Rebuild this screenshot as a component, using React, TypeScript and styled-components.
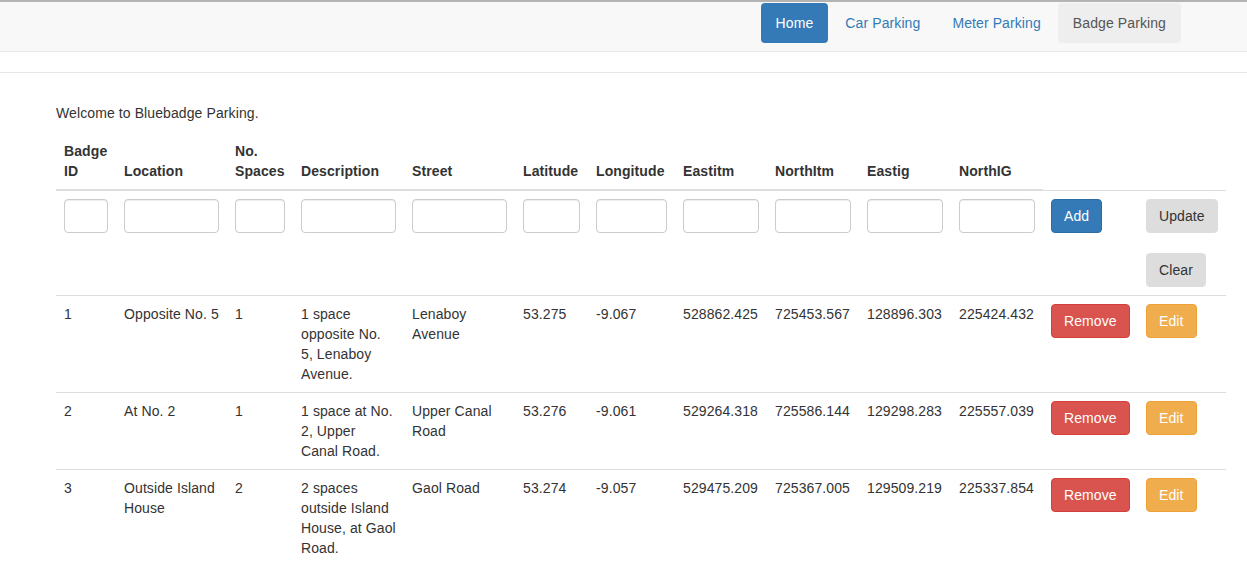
import React from "react";
import styled, { createGlobalStyle } from "styled-components";

const Global = createGlobalStyle`
  html, body { margin: 0; padding: 0; background: #fff; }
  body {
    font-family: "Liberation Sans", Arial, sans-serif;
    font-size: 14px;
    line-height: 20px;
    letter-spacing: 0.1px;
    color: #333;
    border-top: 2px solid #b3b3b3;
  }
  * { box-sizing: border-box; }
`;

const Navbar = styled.nav`
  background: #f8f8f8;
  border-bottom: 1px solid #e7e7e7;
  height: 50px;
  padding: 1px 66px 0 0;
  display: flex;
  justify-content: flex-end;
  align-items: flex-start;
`;

const Pills = styled.ul`
  list-style: none;
  margin: 0;
  padding: 0;
  display: flex;
  gap: 2px;
`;

const Pill = styled.a<{ $active?: boolean; $current?: boolean }>`
  display: block;
  padding: 10px 15px;
  border-radius: 4px;
  text-decoration: none;
  line-height: 20px;
  color: ${(p) => (p.$active ? "#fff" : p.$current ? "#555" : "#337ab7")};
  background: ${(p) => (p.$active ? "#337ab7" : p.$current ? "#eee" : "transparent")};
`;

const Rule = styled.hr`
  margin: 20px 0 0;
  border: 0;
  border-top: 1px solid #e7e7e7;
`;

const Main = styled.main`
  padding: 30px 21px 0 56px;
`;

const Welcome = styled.p`
  margin: 0 0 10px;
`;

const Table = styled.table`
  width: 1170px;
  border-collapse: collapse;
  border-spacing: 0;
  table-layout: fixed;
`;

const Th = styled.th`
  text-align: left;
  vertical-align: bottom;
  padding: 8px;
  font-weight: bold;
  border-bottom: 2px solid #ddd;
  line-height: 20px;
`;

const Td = styled.td`
  vertical-align: top;
  padding: 8px;
  border-top: 1px solid #ddd;
  line-height: 20px;
`;

const Input = styled.input`
  display: block;
  width: 100%;
  height: 34px;
  padding: 6px 12px;
  font-size: 14px;
  font-family: inherit;
  color: #555;
  background: #fff;
  border: 1px solid #ccc;
  border-radius: 4px;
  box-shadow: inset 0 1px 1px rgba(0, 0, 0, 0.075);
`;

const variants = {
  primary: { bg: "#337ab7", border: "#2e6da4", color: "#fff" },
  danger: { bg: "#d9534f", border: "#d43f3a", color: "#fff" },
  warning: { bg: "#f0ad4e", border: "#eea236", color: "#fff" },
  plain: { bg: "#ddd", border: "#ddd", color: "#333" },
};

const Button = styled.button<{ $v: keyof typeof variants }>`
  display: inline-block;
  padding: 6px 12px;
  font-size: 14px;
  font-family: inherit;
  letter-spacing: 0.1px;
  line-height: 20px;
  border-radius: 4px;
  border: 1px solid ${(p) => variants[p.$v].border};
  background: ${(p) => variants[p.$v].bg};
  color: ${(p) => variants[p.$v].color};
  cursor: pointer;
`;

const Stack = styled.div`
  display: flex;
  flex-direction: column;
  align-items: flex-start;
  gap: 20px;
`;

const widths = [60, 111, 66, 111, 111, 73, 87, 92, 92, 92, 92, 95, 88];

const headers: React.ReactNode[] = [
  "Badge ID",
  "Location",
  "No. Spaces",
  "Description",
  "Street",
  "Latitude",
  "Longitude",
  "Eastitm",
  "NorthItm",
  "Eastig",
  "NorthIG",
];

const rows = [
  ["1", "Opposite No. 5", "1", "1 space opposite No. 5, Lenaboy Avenue.", "Lenaboy Avenue", "53.275", "-9.067", "528862.425", "725453.567", "128896.303", "225424.432"],
  ["2", "At No. 2", "1", "1 space at No. 2, Upper Canal Road.", "Upper Canal Road", "53.276", "-9.061", "529264.318", "725586.144", "129298.283", "225557.039"],
  ["3", "Outside Island House", "2", "2 spaces outside Island House, at Gaol Road.", "Gaol Road", "53.274", "-9.057", "529475.209", "725367.005", "129509.219", "225337.854"],
];

export default function App() {
  return (
    <>
      <Global />
      <Navbar>
        <Pills>
          <li><Pill href="#" $active>Home</Pill></li>
          <li><Pill href="#">Car Parking</Pill></li>
          <li><Pill href="#">Meter Parking</Pill></li>
          <li><Pill href="#" $current>Badge Parking</Pill></li>
        </Pills>
      </Navbar>
      <Rule />
      <Main>
        <Welcome>Welcome to Bluebadge Parking.</Welcome>
        <Table>
          <colgroup>
            {widths.map((w, i) => (
              <col key={i} style={{ width: w }} />
            ))}
          </colgroup>
          <thead>
            <tr>
              {headers.map((h, i) => (
                <Th key={i}>{h}</Th>
              ))}
            </tr>
          </thead>
          <tbody>
            <tr>
              {headers.map((_, i) => (
                <Td key={i}>
                  <Input type="text" />
                </Td>
              ))}
              <Td>
                <Button $v="primary">Add</Button>
              </Td>
              <Td>
                <Stack>
                  <Button $v="plain">Update</Button>
                  <Button $v="plain">Clear</Button>
                </Stack>
              </Td>
            </tr>
            {rows.map((r) => (
              <tr key={r[0]}>
                {r.map((c, i) => (
                  <Td key={i}>{c}</Td>
                ))}
                <Td>
                  <Button $v="danger">Remove</Button>
                </Td>
                <Td>
                  <Button $v="warning">Edit</Button>
                </Td>
              </tr>
            ))}
          </tbody>
        </Table>
      </Main>
    </>
  );
}
